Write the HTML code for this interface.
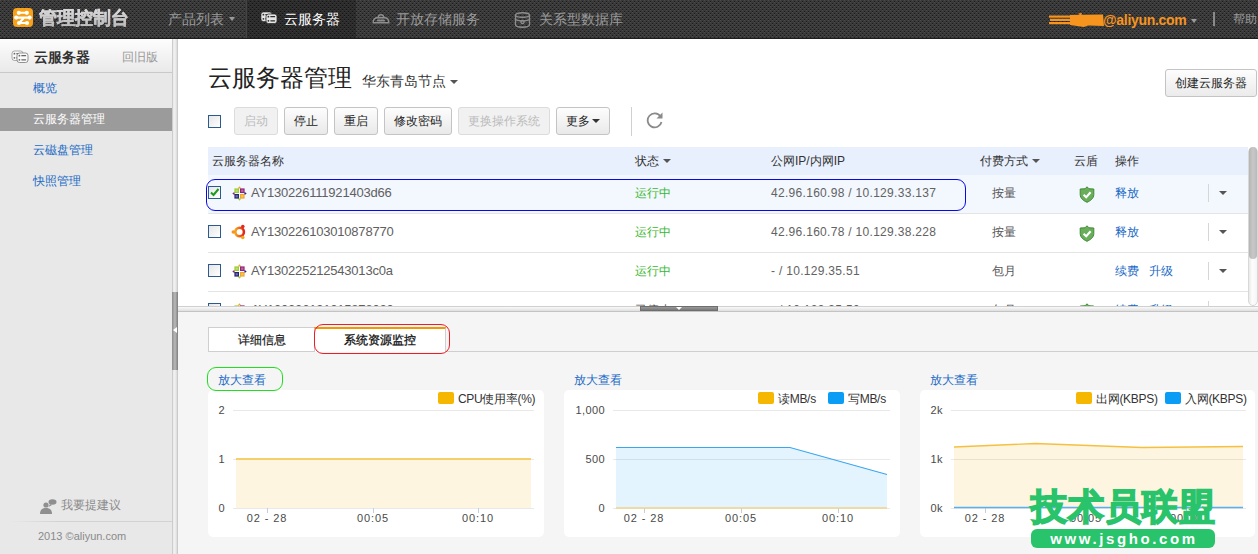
<!DOCTYPE html>
<html><head><meta charset="utf-8">
<style>
*{margin:0;padding:0;box-sizing:border-box}
html,body{width:1258px;height:554px;overflow:hidden;background:#fff;font-family:"Liberation Sans",sans-serif;font-size:12px;color:#333}
.a{position:absolute;white-space:nowrap}
#hdr{position:absolute;left:0;top:0;width:1258px;height:39px;background:#393939;border-bottom:1px solid #1e1e1e}
#side{position:absolute;left:0;top:39px;width:172px;height:515px;background:#e8e8e8}
#vsplit{position:absolute;left:172px;top:39px;width:6px;height:515px;background:linear-gradient(90deg,#bdbdbd,#f4f4f4 30%,#e6e6e6 70%,#bfbfbf)}
#main{position:absolute;left:178px;top:39px;width:1080px;height:267px;background:#fff}
#bottom{position:absolute;left:178px;top:312px;width:1080px;height:242px;background:#f5f5f5}
.btn{position:absolute;top:107px;height:28px;border:1px solid #c4c4c4;border-radius:3px;background:linear-gradient(#fdfdfd,#e9e9e9);color:#222;font-size:12px;text-align:center;line-height:26px}
.btn.dis{color:#bbb;background:#f1f1f1;border-color:#dcdcdc}
.cb{position:absolute;width:13px;height:13px;border:1px solid #2b5a8f;background:linear-gradient(135deg,#e6e6e6,#fff)}
.rowline{position:absolute;left:208px;width:1040px;height:1px;background:#e4e4e4}
.grey{color:#555}
.green{color:#38b82e}
.link{color:#1a6ac6}
.panel{position:absolute;top:390px;height:147px;background:#fff;border-radius:5px}
.ylab{position:absolute;font-size:11px;color:#4a4a4a;text-align:right;letter-spacing:0.4px}
.xlab{position:absolute;font-size:11px;color:#4a4a4a;letter-spacing:0.9px}
.grid{position:absolute;height:1px;background:#e9e9e9}
</style></head><body>

<div id="hdr">
 <svg class="a" style="left:0;top:0" width="1258" height="38"><defs><pattern id="hp" width="4" height="4" patternUnits="userSpaceOnUse"><rect width="4" height="4" fill="#393939"/><rect x="0" y="3" width="1" height="1" fill="#1c1c1c"/><rect x="2" y="1" width="1" height="1" fill="#1c1c1c"/><rect x="0" y="0" width="1" height="1" fill="#4a4a4a"/><rect x="2" y="2" width="1" height="1" fill="#4a4a4a"/></pattern><pattern id="hp2" width="4" height="4" patternUnits="userSpaceOnUse"><rect width="4" height="4" fill="#2c2c2c"/><rect x="0" y="3" width="1" height="1" fill="#141414"/><rect x="2" y="1" width="1" height="1" fill="#141414"/><rect x="0" y="0" width="1" height="1" fill="#383838"/><rect x="2" y="2" width="1" height="1" fill="#383838"/></pattern></defs><rect width="1258" height="38" fill="url(#hp)"/><rect x="246" width="110" height="38" fill="url(#hp2)"/><rect x="246" width="1" height="38" fill="#444"/></svg>
 <svg class="a" style="left:13px;top:8px" width="20" height="19" viewBox="0 0 20 19"><rect width="20" height="19" rx="4" fill="#f7a11a"/><g stroke="#fff" stroke-width="2.1" fill="none" stroke-linecap="round" stroke-linejoin="round"><path d="M6 4.8H13.6M3.2 9.6H16.6M11 9.8L6.2 15H13.8"/></g><g fill="#fff"><circle cx="5.8" cy="4.8" r="2.1"/><circle cx="13.8" cy="4.8" r="2.1"/><circle cx="3.2" cy="9.6" r="2.1"/><circle cx="16.6" cy="9.6" r="2.1"/><circle cx="6" cy="15" r="2.1"/><circle cx="14" cy="15" r="2.1"/></g></svg>
 <div class="a" style="left:39px;top:6.5px;font-size:17.5px;font-weight:bold;color:#c8c8c8;line-height:22px;background:linear-gradient(#f0f0f0,#a8a8a8);-webkit-background-clip:text;background-clip:text;-webkit-text-fill-color:transparent;-webkit-text-stroke:0.4px rgba(200,200,200,0.5)">管理控制台</div>
 <div class="a" style="left:168px;top:11px;font-size:14px;color:#9a9a9a;line-height:17px">产品列表</div>
 <div class="a" style="left:229px;top:17px;width:0;height:0;border-left:3.5px solid transparent;border-right:3.5px solid transparent;border-top:4px solid #9a9a9a"></div>
 
 <svg class="a" style="left:260px;top:11px" width="18" height="14" viewBox="0 0 18 14"><g transform="translate(1,1)"><rect width="11" height="9.5" rx="2.5" fill="#e6e6e6" stroke="#2e2e2e" stroke-width="0.6"/><circle cx="2.4" cy="2.7" r="0.9" fill="#2e2e2e"/><circle cx="2.4" cy="6.8" r="0.9" fill="#2e2e2e"/><rect x="4.2" y="2.1" width="5" height="1.2" rx="0.6" fill="#2e2e2e"/><rect x="4.2" y="6.2" width="5" height="1.2" rx="0.6" fill="#2e2e2e"/></g><g transform="translate(6,3)"><rect width="11" height="9.5" rx="2.5" fill="#e6e6e6" stroke="#2e2e2e" stroke-width="0.8"/><circle cx="2.4" cy="2.7" r="0.9" fill="#2e2e2e"/><circle cx="2.4" cy="6.8" r="0.9" fill="#2e2e2e"/><rect x="4.2" y="2.1" width="5" height="1.2" rx="0.6" fill="#2e2e2e"/><rect x="4.2" y="6.2" width="5" height="1.2" rx="0.6" fill="#2e2e2e"/></g></svg>
 <div class="a" style="left:284px;top:11px;font-size:14px;color:#fff;line-height:17px">云服务器</div>
 <svg class="a" style="left:372px;top:13px" width="18" height="11" viewBox="0 0 18 11"><g fill="none" stroke="#8e8e8e" stroke-width="1.4"><path d="M6.2 4.6a2.8 2.8 0 0 1 5.6 0"/><path d="M1.2 9.8C1.2 6.5 3 4.8 5.5 4.8H12.5C15 4.8 16.8 6.5 16.8 9.8Z"/></g><rect x="5" y="6.6" width="8" height="1.8" rx="0.9" fill="#8e8e8e"/></svg>
 <div class="a" style="left:396px;top:11px;font-size:14px;color:#999;line-height:17px">开放存储服务</div>
 <svg class="a" style="left:514px;top:12px" width="17" height="16" viewBox="0 0 17 16"><g fill="none" stroke="#8e8e8e" stroke-width="1.4"><ellipse cx="8.5" cy="3" rx="7" ry="2.3"/><path d="M1.5 3V12.8C1.5 14.2 4.5 15.2 8.5 15.2S15.5 14.2 15.5 12.8V3"/><path d="M1.5 7.5C3.5 8.8 5.5 9 8.5 9S13.5 8.8 15.5 7.5"/><circle cx="8.5" cy="10" r="1.6"/></g></svg>
 <div class="a" style="left:539px;top:11px;font-size:14px;color:#999;line-height:17px">关系型数据库</div>
 <svg class="a" style="left:1048px;top:12px" width="58" height="16" viewBox="0 0 58 16"><g fill="#f7941d"><path d="M22 3L55 2.5L56 14L40 13.5L36 15L22 13z"/><rect x="1" y="3.5" width="24" height="2.2"/><rect x="2" y="6.8" width="23" height="2.2"/><rect x="1" y="10" width="24" height="2.2"/><path d="M30 1.5L34 1L33 4z"/></g></svg>
 <div class="a" style="left:1103px;top:12px;font-size:14px;font-weight:bold;color:#f7941d;line-height:17px;letter-spacing:-0.3px">@aliyun.com</div>
 <div class="a" style="left:1191px;top:19px;width:0;height:0;border-left:3.5px solid transparent;border-right:3.5px solid transparent;border-top:4px solid #9a9a9a"></div>
 <div class="a" style="left:1213px;top:12px;width:2px;height:14px;background:#8a8a8a"></div>
 <div class="a" style="left:1233px;top:11px;font-size:12px;color:#9a9a9a;line-height:17px">帮助</div>
</div>
<div id="side">
 <div class="a" style="left:0;top:0;width:172px;height:34px;background:linear-gradient(#fdfdfd,#e9e9e9);border-bottom:1px solid #c9c9c9"></div>
 <svg class="a" style="left:11px;top:11px" width="18" height="14" viewBox="0 0 18 14"><g transform="translate(1,1)"><rect width="11" height="9.5" rx="2.5" fill="#fafafa" stroke="#777" stroke-width="0.6"/><circle cx="2.4" cy="2.7" r="0.9" fill="#666"/><circle cx="2.4" cy="6.8" r="0.9" fill="#666"/><rect x="4.2" y="2.1" width="5" height="1.2" rx="0.6" fill="#666"/><rect x="4.2" y="6.2" width="5" height="1.2" rx="0.6" fill="#666"/></g><g transform="translate(6,3)"><rect width="11" height="9.5" rx="2.5" fill="#fafafa" stroke="#777" stroke-width="0.8"/><circle cx="2.4" cy="2.7" r="0.9" fill="#666"/><circle cx="2.4" cy="6.8" r="0.9" fill="#666"/><rect x="4.2" y="2.1" width="5" height="1.2" rx="0.6" fill="#666"/><rect x="4.2" y="6.2" width="5" height="1.2" rx="0.6" fill="#666"/></g></svg>
 <div class="a" style="left:34px;top:9px;font-size:14px;font-weight:bold;color:#333;line-height:18px">云服务器</div>
 <div class="a" style="left:122px;top:10px;font-size:12px;color:#999;line-height:16px">回旧版</div>
 <div class="a link" style="left:33px;top:41px;font-size:12px;line-height:16px">概览</div>
 <div class="a" style="left:0;top:69px;width:172px;height:23px;background:#9b9b9b"></div>
 <div class="a" style="left:33px;top:72px;font-size:12px;color:#fff;line-height:16px">云服务器管理</div>
 <div class="a link" style="left:33px;top:103px;font-size:12px;line-height:16px">云磁盘管理</div>
 <div class="a link" style="left:33px;top:134px;font-size:12px;line-height:16px">快照管理</div>
 <svg class="a" style="left:40px;top:460px" width="17" height="15" viewBox="0 0 17 15"><g fill="#8f8f8f"><circle cx="6" cy="6" r="2.6"/><path d="M0 15c0-4 2-6 6-6s6 2 6 6z"/><ellipse cx="12.5" cy="3" rx="4" ry="2.7"/><path d="M10 5l-1.5 3 3.5-2z"/></g></svg>
 <div class="a" style="left:61px;top:458px;font-size:12px;color:#8a8a8a;line-height:16px">我要提建议</div>
 <div class="a" style="left:10px;top:482px;width:162px;height:1px;background:linear-gradient(90deg,rgba(200,200,200,0),#d2d2d2 30%)"></div>
 <div class="a" style="left:38px;top:490px;font-size:11px;color:#8a8a8a;line-height:14px">2013 ©aliyun.com</div>
</div>
<div id="vsplit"></div>
<div id="main"></div>
<div class="a" style="left:208px;top:64px;font-size:24px;color:#222;line-height:28px">云服务器管理</div>
<div class="a" style="left:362px;top:73px;font-size:14px;color:#333;line-height:17px">华东青岛节点</div>
<div class="a" style="left:450px;top:80px;width:0;height:0;border-left:4px solid transparent;border-right:4px solid transparent;border-top:4px solid #555"></div>
<div class="a" style="left:1165px;top:69px;width:92px;height:28px;border:1px solid #c4c4c4;border-radius:3px;background:linear-gradient(#fdfdfd,#ebebeb);font-size:12px;color:#222;line-height:26px;text-align:center">创建云服务器</div>
<div class="cb" style="left:208px;top:115px"></div>
<div class="btn dis" style="left:234px;width:44px">启动</div>
<div class="btn" style="left:284px;width:44px">停止</div>
<div class="btn" style="left:334px;width:44px">重启</div>
<div class="btn" style="left:384px;width:68px">修改密码</div>
<div class="btn dis" style="left:458px;width:92px">更换操作系统</div>
<div class="btn" style="left:556px;width:54px;text-align:left;padding-left:9px">更多</div>
<div class="a" style="left:592px;top:119px;width:0;height:0;border-left:4px solid transparent;border-right:4px solid transparent;border-top:4px solid #333"></div>
<div class="a" style="left:631px;top:107px;width:1px;height:29px;background:#d0d0d0"></div>
<svg class="a" style="left:646px;top:111px" width="18" height="18" viewBox="0 0 18 18"><path d="M14.5 5.5A7 7 0 1 0 15.5 11" fill="none" stroke="#8a8a8a" stroke-width="1.8"/><path d="M16.5 1.5v6h-6z" fill="#8a8a8a"/></svg>

<div class="a" style="left:208px;top:147px;width:1040px;height:28px;background:#e9f0fd"></div>
<div class="a" style="left:212px;top:153px;font-size:12px;color:#333;line-height:16px">云服务器名称</div>
<div class="a" style="left:635px;top:153px;font-size:12px;color:#333;line-height:16px">状态</div>
<div class="a" style="left:663px;top:159px;width:0;height:0;border-left:4px solid transparent;border-right:4px solid transparent;border-top:4px solid #555"></div>
<div class="a" style="left:771px;top:153px;font-size:12px;color:#333;line-height:16px">公网IP/内网IP</div>
<div class="a" style="left:980px;top:153px;font-size:12px;color:#333;line-height:16px">付费方式</div>
<div class="a" style="left:1032px;top:159px;width:0;height:0;border-left:4px solid transparent;border-right:4px solid transparent;border-top:4px solid #555"></div>
<div class="a" style="left:1074px;top:153px;font-size:12px;color:#333;line-height:16px">云盾</div>
<div class="a" style="left:1115px;top:153px;font-size:12px;color:#333;line-height:16px">操作</div>

<div class="a" style="left:208px;top:175px;width:1040px;height:38px;background:#f3f7fe"></div>
<div class="rowline" style="top:213px"></div>
<div class="rowline" style="top:252px"></div>
<div class="rowline" style="top:291px"></div>
<div class="cb" style="left:208px;top:186px"></div><svg class="a" style="left:209px;top:187px" width="11" height="11" viewBox="0 0 11 11"><path d="M2 5.5l2.5 2.5 5-6" fill="none" stroke="#1a9a1a" stroke-width="2"/></svg><svg class="a" style="left:232px;top:186px" width="15" height="15" viewBox="0 0 15 15"><path d="M7.5 0.3L9.3 2.6H5.7z" fill="#efa724"/><path d="M14.7 7.5L12.4 9.3V5.7z" fill="#262577"/><path d="M7.5 14.7L5.7 12.4H9.3z" fill="#9ccd2a"/><path d="M0.3 7.5L2.6 5.7V9.3z" fill="#932279"/><rect x="2.4" y="2.4" width="4.6" height="4.6" fill="#9ccd2a"/><rect x="8" y="2.4" width="4.6" height="4.6" fill="#932279"/><rect x="8" y="8" width="4.6" height="4.6" fill="#efa724"/><rect x="2.4" y="8" width="4.6" height="4.6" fill="#262577"/><g fill="#fff" opacity="0.35"><rect x="3.6" y="3.6" width="2.2" height="2.2"/><rect x="9.2" y="3.6" width="2.2" height="2.2"/><rect x="9.2" y="9.2" width="2.2" height="2.2"/><rect x="3.6" y="9.2" width="2.2" height="2.2"/></g></svg><div class="a grey" style="left:251px;top:185px;font-size:13px;line-height:16px;letter-spacing:-0.2px;color:#606060">AY130226111921403d66</div><div class="a green" style="left:635px;top:185px;font-size:12px;line-height:16px">运行中</div><div class="a grey" style="left:771px;top:185px;font-size:12px;line-height:16px;letter-spacing:0.3px;color:#626262">42.96.160.98 / 10.129.33.137</div><div class="a grey" style="left:992px;top:185px;font-size:12px;line-height:16px">按量</div><svg class="a" style="left:1079px;top:186px" width="16" height="17" viewBox="0 0 16 17"><path d="M8 0.8L10 2.8L14.8 3V8.5C14.8 12.3 11.5 14.8 8 16.3C4.5 14.8 1.2 12.3 1.2 8.5V3L6 2.8Z" fill="#6aae5b" stroke="#3e8a36" stroke-width="1"/><path d="M4.6 8.8L7.2 11.2L11.6 6.2" fill="none" stroke="#fff" stroke-width="2.1"/></svg><div class="a link" style="left:1115px;top:185px;font-size:12px;line-height:16px">释放</div><div class="a" style="left:1208px;top:184px;width:1px;height:18px;background:#d6d6d6"></div><div class="a" style="left:1219px;top:191px;width:0;height:0;border-left:4px solid transparent;border-right:4px solid transparent;border-top:4px solid #555"></div>
<div class="cb" style="left:208px;top:225px"></div><svg class="a" style="left:231px;top:224px" width="16" height="16" viewBox="0 0 16 16"><defs><linearGradient id="ug" x1="0" y1="0" x2="1" y2="0"><stop offset="0" stop-color="#f6a519"/><stop offset="1" stop-color="#e2231a"/></linearGradient></defs><circle cx="8.6" cy="8" r="4.3" fill="none" stroke="url(#ug)" stroke-width="2.6"/><circle cx="2.3" cy="8" r="1.8" fill="#f7941d"/><circle cx="11.8" cy="2.5" r="1.8" fill="#e52a1a"/><circle cx="11.8" cy="13.5" r="1.8" fill="#f6a519"/></svg><div class="a grey" style="left:251px;top:224px;font-size:13px;line-height:16px;letter-spacing:-0.2px;color:#606060">AY130226103010878770</div><div class="a green" style="left:635px;top:224px;font-size:12px;line-height:16px">运行中</div><div class="a grey" style="left:771px;top:224px;font-size:12px;line-height:16px;letter-spacing:0.3px;color:#626262">42.96.160.78 / 10.129.38.228</div><div class="a grey" style="left:992px;top:224px;font-size:12px;line-height:16px">按量</div><svg class="a" style="left:1079px;top:225px" width="16" height="17" viewBox="0 0 16 17"><path d="M8 0.8L10 2.8L14.8 3V8.5C14.8 12.3 11.5 14.8 8 16.3C4.5 14.8 1.2 12.3 1.2 8.5V3L6 2.8Z" fill="#6aae5b" stroke="#3e8a36" stroke-width="1"/><path d="M4.6 8.8L7.2 11.2L11.6 6.2" fill="none" stroke="#fff" stroke-width="2.1"/></svg><div class="a link" style="left:1115px;top:224px;font-size:12px;line-height:16px">释放</div><div class="a" style="left:1208px;top:223px;width:1px;height:18px;background:#d6d6d6"></div><div class="a" style="left:1219px;top:230px;width:0;height:0;border-left:4px solid transparent;border-right:4px solid transparent;border-top:4px solid #555"></div>
<div class="cb" style="left:208px;top:264px"></div><svg class="a" style="left:232px;top:264px" width="15" height="15" viewBox="0 0 15 15"><path d="M7.5 0.3L9.3 2.6H5.7z" fill="#efa724"/><path d="M14.7 7.5L12.4 9.3V5.7z" fill="#262577"/><path d="M7.5 14.7L5.7 12.4H9.3z" fill="#9ccd2a"/><path d="M0.3 7.5L2.6 5.7V9.3z" fill="#932279"/><rect x="2.4" y="2.4" width="4.6" height="4.6" fill="#9ccd2a"/><rect x="8" y="2.4" width="4.6" height="4.6" fill="#932279"/><rect x="8" y="8" width="4.6" height="4.6" fill="#efa724"/><rect x="2.4" y="8" width="4.6" height="4.6" fill="#262577"/><g fill="#fff" opacity="0.35"><rect x="3.6" y="3.6" width="2.2" height="2.2"/><rect x="9.2" y="3.6" width="2.2" height="2.2"/><rect x="9.2" y="9.2" width="2.2" height="2.2"/><rect x="3.6" y="9.2" width="2.2" height="2.2"/></g></svg><div class="a grey" style="left:251px;top:263px;font-size:13px;line-height:16px;letter-spacing:-0.2px;color:#606060">AY130225212543013c0a</div><div class="a green" style="left:635px;top:263px;font-size:12px;line-height:16px">运行中</div><div class="a grey" style="left:771px;top:263px;font-size:12px;line-height:16px;letter-spacing:0.3px;color:#626262">- / 10.129.35.51</div><div class="a grey" style="left:992px;top:263px;font-size:12px;line-height:16px">包月</div><div class="a link" style="left:1115px;top:263px;font-size:12px;line-height:16px">续费</div><div class="a link" style="left:1149px;top:263px;font-size:12px;line-height:16px">升级</div><div class="a" style="left:1208px;top:262px;width:1px;height:18px;background:#d6d6d6"></div><div class="a" style="left:1219px;top:269px;width:0;height:0;border-left:4px solid transparent;border-right:4px solid transparent;border-top:4px solid #555"></div>
<div class="cb" style="left:208px;top:303px"></div><svg class="a" style="left:232px;top:303px" width="15" height="15" viewBox="0 0 15 15"><path d="M7.5 0.3L9.3 2.6H5.7z" fill="#efa724"/><path d="M14.7 7.5L12.4 9.3V5.7z" fill="#262577"/><path d="M7.5 14.7L5.7 12.4H9.3z" fill="#9ccd2a"/><path d="M0.3 7.5L2.6 5.7V9.3z" fill="#932279"/><rect x="2.4" y="2.4" width="4.6" height="4.6" fill="#9ccd2a"/><rect x="8" y="2.4" width="4.6" height="4.6" fill="#932279"/><rect x="8" y="8" width="4.6" height="4.6" fill="#efa724"/><rect x="2.4" y="8" width="4.6" height="4.6" fill="#262577"/><g fill="#fff" opacity="0.35"><rect x="3.6" y="3.6" width="2.2" height="2.2"/><rect x="9.2" y="3.6" width="2.2" height="2.2"/><rect x="9.2" y="9.2" width="2.2" height="2.2"/><rect x="3.6" y="9.2" width="2.2" height="2.2"/></g></svg><div class="a grey" style="left:251px;top:302px;font-size:13px;line-height:16px;letter-spacing:-0.2px;color:#606060">AY130226191215878020</div><div class="a grey" style="left:635px;top:302px;font-size:12px;line-height:16px">已停止</div><div class="a grey" style="left:771px;top:302px;font-size:12px;line-height:16px;letter-spacing:0.3px;color:#626262">- / 10.129.35.50</div><div class="a grey" style="left:992px;top:302px;font-size:12px;line-height:16px">包月</div><svg class="a" style="left:1079px;top:303px" width="16" height="17" viewBox="0 0 16 17"><path d="M8 0.8L10 2.8L14.8 3V8.5C14.8 12.3 11.5 14.8 8 16.3C4.5 14.8 1.2 12.3 1.2 8.5V3L6 2.8Z" fill="#6aae5b" stroke="#3e8a36" stroke-width="1"/><path d="M4.6 8.8L7.2 11.2L11.6 6.2" fill="none" stroke="#fff" stroke-width="2.1"/></svg><div class="a link" style="left:1115px;top:302px;font-size:12px;line-height:16px">续费</div><div class="a link" style="left:1149px;top:302px;font-size:12px;line-height:16px">升级</div><div class="a" style="left:1208px;top:301px;width:1px;height:18px;background:#d6d6d6"></div><div class="a" style="left:1219px;top:308px;width:0;height:0;border-left:4px solid transparent;border-right:4px solid transparent;border-top:4px solid #555"></div>
<div class="a" style="left:1248px;top:147px;width:10px;height:159px;background:linear-gradient(90deg,#e9e9e9,#fdfdfd 40%,#f4f4f4);border:1px solid #d8d8d8;border-radius:5px"></div>
<div class="a" style="left:1249px;top:147px;width:8px;height:112px;background:linear-gradient(90deg,#b5b5b5,#c8c8c8 50%,#b9b9b9);border-radius:4px"></div>

<div id="bottom"></div>
<div class="a" style="left:178px;top:306px;width:1080px;height:6px;background:linear-gradient(#bcbcbc,#f6f6f6 25%,#e2e2e2 75%,#b4b4b4)"></div>
<div class="a" style="left:640px;top:306px;width:78px;height:5px;background:linear-gradient(#9a9a9a,#7a7a7a);border:1px solid #6e6e6e"></div>
<div class="a" style="left:676px;top:307px;width:0;height:0;border-left:3px solid transparent;border-right:3px solid transparent;border-top:3px solid #fff"></div>
<div class="a" style="left:172px;top:292px;width:6px;height:78px;background:linear-gradient(90deg,#8d8d8d,#b9b9b9 50%,#7d7d7d)"></div>
<div class="a" style="left:173px;top:327px;width:0;height:0;border-top:3px solid transparent;border-bottom:3px solid transparent;border-right:4px solid #fff"></div>

<div class="a" style="left:208px;top:351px;width:1050px;height:1px;background:#cfcfcf"></div>
<div class="a" style="left:208px;top:327px;width:107px;height:24px;background:#fff;border:1px solid #cfcfcf;border-bottom:none;font-size:12px;color:#222;-webkit-text-stroke:0.2px #222;text-align:center;line-height:24px">详细信息</div>
<div class="a" style="left:314px;top:327px;width:132px;height:25px;background:#fff;border:1px solid #cfcfcf;border-top:2px solid #f39800;border-bottom:none;font-size:12px;color:#111;-webkit-text-stroke:0.3px #111;text-align:center;line-height:22px">系统资源监控</div>
<div class="a" style="left:314px;top:324px;width:136px;height:30px;border:1px solid #ee1c24;border-radius:9px"></div>
<div class="a link" style="left:218px;top:373px;font-size:12px;line-height:15px">放大查看</div><div class="panel" style="left:208px;width:336px"></div><div class="grid" style="left:233px;top:410px;width:301px"></div><div class="grid" style="left:233px;top:459px;width:301px"></div><div class="grid" style="left:233px;top:508px;width:301px"></div><div class="ylab" style="left:173px;top:403px;width:52px;line-height:14px">2</div><div class="ylab" style="left:173px;top:452px;width:52px;line-height:14px">1</div><div class="ylab" style="left:173px;top:501px;width:52px;line-height:14px">0</div><div class="xlab" style="left:237px;top:511px;width:60px;text-align:center;line-height:14px">02 - 28</div><div class="a" style="left:267px;top:508px;width:1px;height:5px;background:#c0d0e0"></div><div class="xlab" style="left:343px;top:511px;width:60px;text-align:center;line-height:14px">00:05</div><div class="a" style="left:373px;top:508px;width:1px;height:5px;background:#c0d0e0"></div><div class="xlab" style="left:448px;top:511px;width:60px;text-align:center;line-height:14px">00:10</div><div class="a" style="left:478px;top:508px;width:1px;height:5px;background:#c0d0e0"></div><div class="a" style="left:438px;top:392px;width:16px;height:12px;background:#f5b700;border-radius:2px"></div><div class="a" style="left:458px;top:391px;font-size:12px;color:#333;line-height:16px;letter-spacing:-0.3px">CPU使用率(%)</div>
<div class="a link" style="left:574px;top:373px;font-size:12px;line-height:15px">放大查看</div><div class="panel" style="left:564px;width:336px"></div><div class="grid" style="left:613px;top:410px;width:277px"></div><div class="grid" style="left:613px;top:459px;width:277px"></div><div class="grid" style="left:613px;top:508px;width:277px"></div><div class="ylab" style="left:553px;top:403px;width:52px;line-height:14px">1,000</div><div class="ylab" style="left:553px;top:452px;width:52px;line-height:14px">500</div><div class="ylab" style="left:553px;top:501px;width:52px;line-height:14px">0</div><div class="xlab" style="left:614px;top:511px;width:60px;text-align:center;line-height:14px">02 - 28</div><div class="a" style="left:644px;top:508px;width:1px;height:5px;background:#c0d0e0"></div><div class="xlab" style="left:711px;top:511px;width:60px;text-align:center;line-height:14px">00:05</div><div class="a" style="left:741px;top:508px;width:1px;height:5px;background:#c0d0e0"></div><div class="xlab" style="left:808px;top:511px;width:60px;text-align:center;line-height:14px">00:10</div><div class="a" style="left:838px;top:508px;width:1px;height:5px;background:#c0d0e0"></div><div class="a" style="left:758px;top:392px;width:16px;height:12px;background:#f5b700;border-radius:2px"></div><div class="a" style="left:778px;top:391px;font-size:12px;color:#333;line-height:16px;letter-spacing:-0.3px">读MB/s</div><div class="a" style="left:828px;top:392px;width:16px;height:12px;background:#0b9cf5;border-radius:2px"></div><div class="a" style="left:848px;top:391px;font-size:12px;color:#333;line-height:16px;letter-spacing:-0.3px">写MB/s</div>
<div class="a link" style="left:930px;top:373px;font-size:12px;line-height:15px">放大查看</div><div class="panel" style="left:920px;width:335px"></div><div class="grid" style="left:951px;top:410px;width:295px"></div><div class="grid" style="left:951px;top:459px;width:295px"></div><div class="grid" style="left:951px;top:508px;width:295px"></div><div class="ylab" style="left:891px;top:403px;width:52px;line-height:14px">2k</div><div class="ylab" style="left:891px;top:452px;width:52px;line-height:14px">1k</div><div class="ylab" style="left:891px;top:501px;width:52px;line-height:14px">0k</div><div class="xlab" style="left:955px;top:511px;width:60px;text-align:center;line-height:14px">02 - 28</div><div class="a" style="left:985px;top:508px;width:1px;height:5px;background:#c0d0e0"></div><div class="xlab" style="left:1056px;top:511px;width:60px;text-align:center;line-height:14px">00:05</div><div class="a" style="left:1086px;top:508px;width:1px;height:5px;background:#c0d0e0"></div><div class="xlab" style="left:1156px;top:511px;width:60px;text-align:center;line-height:14px">00:10</div><div class="a" style="left:1186px;top:508px;width:1px;height:5px;background:#c0d0e0"></div><div class="a" style="left:1076px;top:392px;width:16px;height:12px;background:#f5b700;border-radius:2px"></div><div class="a" style="left:1096px;top:391px;font-size:12px;color:#333;line-height:16px;letter-spacing:-0.3px">出网(KBPS)</div><div class="a" style="left:1165px;top:392px;width:16px;height:12px;background:#0b9cf5;border-radius:2px"></div><div class="a" style="left:1185px;top:391px;font-size:12px;color:#333;line-height:16px;letter-spacing:-0.3px">入网(KBPS)</div>
<svg class="a" style="left:0;top:0" width="1258" height="554">
 <path d="M236 459H531V508H236z" fill="#f5b000" fill-opacity="0.12"/><path d="M236 459H531" stroke="#f5cf6a" stroke-width="2"/>
 <path d="M616 447.5L790 447.5L887 474.5V508H616z" fill="#0b9cf5" fill-opacity="0.11"/><path d="M616 447.5L790 447.5L887 474.5" fill="none" stroke="#3aa6ef" stroke-width="1.2"/>
 <path d="M616 508H887" stroke="#f0d48a" stroke-width="1.5"/>
 <path d="M954 447L1035 443.5L1142 447.5L1243 446.5V508H954z" fill="#f5b000" fill-opacity="0.12"/><path d="M954 447L1035 443.5L1142 447.5L1243 446.5" fill="none" stroke="#f5c040" stroke-width="1.3"/>
 <path d="M954 507.5H1243" stroke="#5ab0ef" stroke-width="1.5"/>
</svg>
<div class="a" style="left:207px;top:367px;width:76px;height:24px;border:1px solid #1ee01e;border-radius:9px"></div>
<div class="a" style="left:206px;top:179px;width:760px;height:32px;border:1px solid #0808f0;border-radius:9px"></div>
<div class="a" style="left:1031px;top:485px;font-size:36px;font-weight:bold;color:#28c36a;line-height:44px;letter-spacing:1px;-webkit-text-stroke:1.6px #28c36a">技术员联盟</div>
<div class="a" style="left:1031px;top:529px;width:184px;height:19px;background:#28c36a;border-radius:6px;color:#fff;font-size:15px;font-weight:bold;text-align:center;line-height:19px;letter-spacing:2.6px;text-indent:2px">www.jsgho.com</div>


</body></html>
